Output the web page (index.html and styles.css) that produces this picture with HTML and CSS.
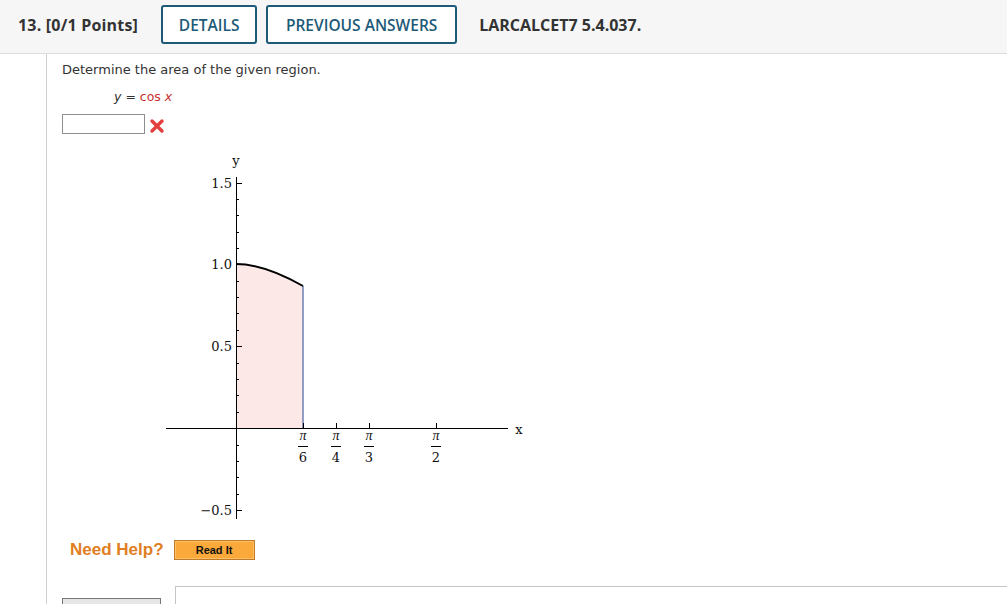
FILE: index.html
```html
<!DOCTYPE html>
<html>
<head>
<meta charset="utf-8">
<link rel="stylesheet" href="styles.css">
</head>
<body>
<div class="header">
  <span class="qnum">13. [0/1 Points]</span>
  <span class="btn btn-details">DETAILS</span>
  <span class="btn btn-prev">PREVIOUS ANSWERS</span>
  <span class="ref">LARCALCET7 5.4.037.</span>
</div>
<div class="main">
  <p class="prompt">Determine the area of the given region.</p>
  <p class="equation"><i>y</i> = <span class="red">cos <i>x</i></span></p>
  <div class="answer-row">
    <span class="answer-box"></span>
    <svg class="wrong" width="16" height="16" viewBox="0 0 16 16"><path d="M3 3 L13 13 M13 3 L3 13" stroke="#e2403f" stroke-width="3.4" stroke-linecap="round"/></svg>
  </div>
  <svg class="graph" width="390" height="380" viewBox="150 145 390 380">
    <path d="M236 428 L236 264 Q270 266 303 286 L303 428 Z" fill="#fde8e8"/>
    <line x1="303" y1="286" x2="303" y2="428" stroke="#6c7fb5" stroke-width="1.5"/>
    <path d="M236 264 C258 264 280 273 303 286" fill="none" stroke="#000" stroke-width="2"/>
    <line x1="236.5" y1="177" x2="236.5" y2="519" stroke="#000" stroke-width="1"/>
    <line x1="166" y1="428.5" x2="508" y2="428.5" stroke="#000" stroke-width="1"/>
    <g stroke="#000" stroke-width="1">
      <line x1="236" y1="183.5" x2="242" y2="183.5"/>
      <line x1="236" y1="264.5" x2="242" y2="264.5"/>
      <line x1="236" y1="346.5" x2="242" y2="346.5"/>
      <line x1="236" y1="510.5" x2="242" y2="510.5"/>
      <line x1="236" y1="199.5" x2="239" y2="199.5"/>
      <line x1="236" y1="215.5" x2="239" y2="215.5"/>
      <line x1="236" y1="232.5" x2="239" y2="232.5"/>
      <line x1="236" y1="248.5" x2="239" y2="248.5"/>
      <line x1="236" y1="281.5" x2="239" y2="281.5"/>
      <line x1="236" y1="297.5" x2="239" y2="297.5"/>
      <line x1="236" y1="313.5" x2="239" y2="313.5"/>
      <line x1="236" y1="330.5" x2="239" y2="330.5"/>
      <line x1="236" y1="363.5" x2="239" y2="363.5"/>
      <line x1="236" y1="379.5" x2="239" y2="379.5"/>
      <line x1="236" y1="395.5" x2="239" y2="395.5"/>
      <line x1="236" y1="412.5" x2="239" y2="412.5"/>
      <line x1="236" y1="445.5" x2="239" y2="445.5"/>
      <line x1="236" y1="461.5" x2="239" y2="461.5"/>
      <line x1="236" y1="477.5" x2="239" y2="477.5"/>
      <line x1="236" y1="494.5" x2="239" y2="494.5"/>
      <line x1="303.5" y1="423" x2="303.5" y2="428"/>
      <line x1="336.5" y1="423" x2="336.5" y2="428"/>
      <line x1="369.5" y1="423" x2="369.5" y2="428"/>
      <line x1="436.5" y1="423" x2="436.5" y2="428"/>
    </g>
    <g class="glabel">
      <text x="236" y="165" text-anchor="middle">y</text>
      <text x="519" y="434" text-anchor="middle">x</text>
      <text x="232" y="188" text-anchor="end">1.5</text>
      <text x="232" y="269" text-anchor="end">1.0</text>
      <text x="232" y="351" text-anchor="end">0.5</text>
      <text x="232" y="515" text-anchor="end">−0.5</text>
    </g>
    <g class="frac">
      <text x="303" y="440" text-anchor="middle" class="pi">π</text>
      <line x1="298" y1="446.5" x2="308" y2="446.5" stroke="#000"/>
      <text x="303" y="462" text-anchor="middle">6</text>
      <text x="336" y="440" text-anchor="middle" class="pi">π</text>
      <line x1="331" y1="446.5" x2="341" y2="446.5" stroke="#000"/>
      <text x="336" y="462" text-anchor="middle">4</text>
      <text x="369" y="440" text-anchor="middle" class="pi">π</text>
      <line x1="364" y1="446.5" x2="374" y2="446.5" stroke="#000"/>
      <text x="369" y="462" text-anchor="middle">3</text>
      <text x="436" y="440" text-anchor="middle" class="pi">π</text>
      <line x1="431" y1="446.5" x2="441" y2="446.5" stroke="#000"/>
      <text x="436" y="462" text-anchor="middle">2</text>
    </g>
  </svg>
  <div class="help-row">
    <span class="need-help">Need Help?</span>
    <span class="read-it">Read It</span>
  </div>
  <div class="bottom-row">
    <span class="submit">Submit Answer</span>
    <div class="notes"></div>
  </div>
</div>
</body>
</html>
```
FILE: styles.css
```css
html, body {
  margin: 0;
  padding: 0;
  background: #fff;
  overflow: hidden;
}
body {
  width: 1007px;
  height: 604px;
  font-family: "DejaVu Sans", Verdana, sans-serif;
  color: #333;
}
.header {
  box-sizing: border-box;
  height: 54px;
  background: #f6f6f6;
  border-bottom: 1px solid #dcdcdc;
  display: flex;
  align-items: center;
  padding-left: 18px;
  padding-bottom: 4px;
  font-family: "Open Sans", sans-serif;
  font-size: 16px;
}
.qnum {
  font-weight: 700;
  color: #333;
  letter-spacing: 0.2px;
  margin-right: 23px;
}
.btn {
  box-sizing: border-box;
  height: 39px;
  border: 2px solid #1d5a78;
  border-radius: 3px;
  display: flex;
  align-items: center;
  justify-content: center;
  color: #1d5a78;
  font-weight: 600;
  font-size: 15.5px;
  background: #fff;
}
.btn-details {
  width: 96px;
  margin-right: 9px;
}
.btn-prev {
  width: 191px;
  margin-right: 22px;
}
.ref {
  font-weight: 700;
  color: #333;
}
.main {
  margin-left: 46px;
  border-left: 1px solid #cfcfcf;
  padding-left: 15px;
  padding-top: 8px;
  height: 600px;
}
.prompt {
  margin: 0;
  font-size: 13px;
  line-height: 16px;
}
.equation {
  margin: 12px 0 0 52px;
  font-size: 12.5px;
  line-height: 14px;
}
.red {
  color: #c8302f;
}
.answer-row {
  display: flex;
  align-items: center;
  margin-top: 10px;
  height: 20px;
}
.answer-box {
  box-sizing: border-box;
  width: 83px;
  height: 20px;
  border: 1px solid #8e8e8e;
  background: #fff;
}
.wrong {
  margin-left: 4px;
  margin-top: 4px;
}
.graph {
  display: block;
  margin-left: 88px;
  margin-top: 11px;
}
.glabel text, .frac text {
  font-family: "DejaVu Serif", "Liberation Serif", serif;
  font-size: 13px;
  fill: #111;
}
.frac .pi {
  font-family: "Liberation Serif", serif;
  font-size: 14px;
  font-style: italic;
}
.help-row {
  display: flex;
  align-items: center;
  margin-top: 15px;
  margin-left: 8px;
  height: 20px;
}
.need-help {
  font-family: "Liberation Sans", Arial, sans-serif;
  font-weight: 700;
  font-size: 17px;
  color: #e07e22;
  margin-right: 10px;
}
.read-it {
  box-sizing: border-box;
  width: 81px;
  height: 20px;
  background: #faa93a;
  border: 1px solid #c07a28;
  box-shadow: inset 0 0 0 1px #fcc066;
  font-family: "Liberation Sans", Arial, sans-serif;
  font-weight: 700;
  font-size: 11px;
  color: #111;
  display: flex;
  align-items: center;
  justify-content: center;
}
.bottom-row {
  display: flex;
  align-items: flex-start;
  margin-top: 26px;
}
.submit {
  box-sizing: border-box;
  width: 99px;
  height: 24px;
  margin-top: 12px;
  margin-right: 14px;
  border: 1px solid #777;
  background: #e6e6e6;
  font-family: "Liberation Sans", Arial, sans-serif;
  font-size: 12px;
  padding: 4px 0 0 6px;
  color: #222;
}
.notes {
  flex: 1;
  height: 40px;
  border: 1px solid #c4c4c4;
  border-right: none;
}
```
